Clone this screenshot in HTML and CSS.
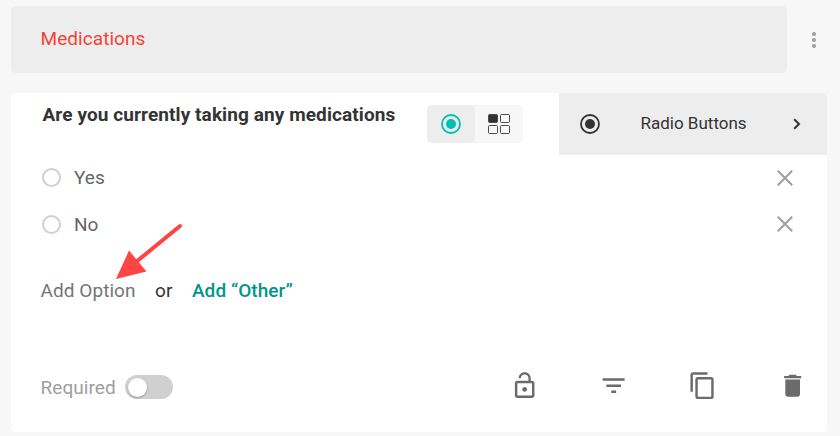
FILE: index.html
```
<!DOCTYPE html>
<html lang="en">
<head>
    <meta charset="UTF-8">
    <meta name="viewport" content="width=device-width, initial-scale=1.0">
    <title>Form Builder</title>
    <link rel="stylesheet" href="styles.css">
</head>
<body>
    <header class="section-row">
        <div class="section-title"><span>Medications</span></div>
        <svg class="more" viewBox="0 0 24 24"><circle cx="12" cy="6" r="2"/><circle cx="12" cy="12" r="2"/><circle cx="12" cy="18" r="2"/></svg>
    </header>

    <main class="card">
        <div class="card-top">
            <h2 class="question">Are you currently taking any medications</h2>
            <div class="view-switch">
                <div class="view active">
                    <svg class="radio-icon" viewBox="0 0 20 20"><circle class="ring" cx="10" cy="10" r="9"/><circle cx="10" cy="10" r="5"/></svg>
                </div>
                <div class="view">
                    <svg class="grid-icon" viewBox="0 0 22 20">
                        <rect class="filled" x="0.5" y="0.5" width="9" height="8" rx="1"/>
                        <rect x="12.5" y="0.5" width="9" height="8" rx="1"/>
                        <rect x="0.5" y="11.5" width="9" height="8" rx="1"/>
                        <rect x="12.5" y="11.5" width="9" height="8" rx="1"/>
                    </svg>
                </div>
            </div>
            <div class="type-select">
                <svg class="radio-icon" viewBox="0 0 20 20"><circle class="ring" cx="10" cy="10" r="9"/><circle cx="10" cy="10" r="5"/></svg>
                <span class="type-name">Radio Buttons</span>
                <svg class="chevron" viewBox="0 0 8 12"><path d="M1.2 1.2 6 6 1.2 10.8"/></svg>
            </div>
        </div>

        <div class="options">
            <div class="option">
                <span class="circle"></span>
                <span class="option-text">Yes</span>
                <svg class="remove" viewBox="0 0 16 16"><path d="M.8.8l14.4 14.4M15.2.8L.8 15.2"/></svg>
            </div>
            <div class="option">
                <span class="circle"></span>
                <span class="option-text">No</span>
                <svg class="remove" viewBox="0 0 16 16"><path d="M.8.8l14.4 14.4M15.2.8L.8 15.2"/></svg>
            </div>
        </div>

        <div class="add-row">
            <span class="add-option">Add Option</span>
            <span class="or">or</span>
            <span class="add-other">Add “Other”</span>
        </div>

        <footer class="card-footer">
            <span class="required">Required</span>
            <span class="toggle"><span class="knob"></span></span>
            <div class="actions">
                <svg viewBox="0 0 24 24"><path d="M12 17c1.1 0 2-.9 2-2s-.9-2-2-2-2 .9-2 2 .9 2 2 2zm6-9h-1V6c0-2.76-2.24-5-5-5S7 3.24 7 6h1.9c0-1.71 1.39-3.1 3.1-3.1s3.1 1.39 3.1 3.1v2H6c-1.1 0-2 .9-2 2v10c0 1.1.9 2 2 2h12c1.1 0 2-.9 2-2V10c0-1.1-.9-2-2-2zm0 12H6V10h12v10z"/></svg>
                <svg viewBox="0 0 24 24"><path d="M10 18h4v-2h-4v2zM3 6v2h18V6H3zm3 7h12v-2H6v2z"/></svg>
                <svg viewBox="0 0 24 24"><path d="M16 1H4c-1.1 0-2 .9-2 2v14h2V3h12V1zm3 4H8c-1.1 0-2 .9-2 2v14c0 1.1.9 2 2 2h11c1.1 0 2-.9 2-2V7c0-1.1-.9-2-2-2zm0 16H8V7h11v14z"/></svg>
                <svg viewBox="0 0 24 24"><path d="M6 19c0 1.1.9 2 2 2h8c1.1 0 2-.9 2-2V7H6v12zM19 4h-3.5l-1-1h-5l-1 1H5v2h14V4z"/></svg>
            </div>
        </footer>

        <svg class="arrow" viewBox="0 0 70 60">
            <path class="shaft" d="M64 6 20 42"/>
            <path class="head" d="M0 59 13 30.5 30.5 51.5z"/>
        </svg>
    </main>
</body>
</html>
```
FILE: styles.css
```
* {
    box-sizing: border-box;
}
body {
    margin: 0;
    padding: 6px 0 0 11px;
    height: 436px;
    overflow: hidden;
    font-family: Roboto, "Liberation Sans", sans-serif;
    font-size: 19px;
    letter-spacing: 0.06px;
    background-color: #f7f7f7;
    color: #333333;
}
svg {
    display: block;
    flex: none;
}
.section-row {
    display: flex;
    align-items: center;
    gap: 15px;
}
.section-title {
    display: flex;
    align-items: center;
    width: 776px;
    height: 67px;
    padding: 0 0 2px 29.5px;
    border-radius: 5px;
    background-color: #ededed;
    color: #f44336;
}
.more {
    width: 24px;
    height: 24px;
    fill: #9e9e9e;
}
.card {
    position: relative;
    width: 816px;
    height: 339px;
    margin-top: 20px;
    border-radius: 5px;
    background-color: #ffffff;
}
.card-top {
    display: flex;
    height: 62px;
}
.question {
    width: 416px;
    margin: 0;
    padding: 10px 0 0 31.5px;
    font-size: 19px;
    line-height: 24px;
    font-weight: 700;
    letter-spacing: 0.09px;
    white-space: nowrap;
}
.view-switch {
    display: flex;
    width: 96px;
    height: 38px;
    margin: 12px 36px 0 0;
    border-radius: 5px;
    background-color: #f7f7f7;
}
.view {
    display: flex;
    align-items: center;
    justify-content: center;
    width: 48px;
    border-radius: 5px;
}
.active {
    background-color: #ededed;
    color: #00bfb3;
}
.radio-icon {
    width: 20px;
    height: 20px;
    fill: currentColor;
}
.radio-icon .ring {
    fill: none;
    stroke: currentColor;
    stroke-width: 1.8;
}
.grid-icon {
    width: 22px;
    height: 20px;
    fill: none;
    stroke: #4a4a4a;
}
.grid-icon .filled {
    fill: #333333;
}
.type-select {
    display: flex;
    align-items: center;
    width: 268px;
    padding: 0 26px 0 21px;
    border-radius: 0 5px 0 0;
    background-color: #ededed;
}
.type-name {
    flex: 1;
    padding: 0 0 2px 40.5px;
    font-size: 17px;
    letter-spacing: 0;
}
.chevron {
    width: 8px;
    height: 12px;
    fill: none;
    stroke: #333333;
    stroke-width: 2;
}
.options {
    padding: 0 34px 0 31px;
}
.option {
    display: flex;
    align-items: center;
    height: 48px;
}
.option:first-child {
    height: 45px;
}
.option:first-child .remove {
    margin-top: 1px;
}
.circle {
    width: 19px;
    height: 19px;
    border: 2px solid #d0d0d0;
    border-radius: 50%;
}
.option-text {
    flex: 1;
    padding-left: 13px;
    color: #666666;
}
.remove {
    width: 16px;
    height: 16px;
    fill: none;
    stroke: #9e9e9e;
    stroke-width: 2;
}
.add-row {
    display: flex;
    align-items: center;
    gap: 19.5px;
    height: 24px;
    margin-top: 30px;
    padding-left: 29.5px;
}
.add-option {
    color: #757575;
}
.add-other {
    color: #009688;
    font-weight: 500;
}
.card-footer {
    display: flex;
    align-items: center;
    height: 30px;
    margin-top: 70px;
    padding: 0 20px 0 29.5px;
}
.required {
    width: 75px;
    color: #9e9e9e;
}
.toggle {
    width: 48px;
    height: 24px;
    margin-left: 9.5px;
    padding: 3px;
    border-radius: 12px;
    background-color: #d0d0d0;
}
.knob {
    display: block;
    width: 19px;
    height: 19px;
    border-radius: 50%;
    background-color: #ffffff;
    box-shadow: 0 1px 2px rgba(0, 0, 0, 0.3);
}
.actions {
    display: flex;
    gap: 60px;
    margin: 0 0 2px auto;
}
.actions svg {
    width: 29.33px;
    height: 29.33px;
    fill: #6b6b6b;
}
/* pointer drawn over the option list */
.arrow {
    position: absolute;
    left: 105px;
    top: 127px;
    width: 70px;
    height: 60px;
}
.shaft {
    stroke: #ff4444;
    stroke-width: 4;
    stroke-linecap: round;
}
.head {
    fill: #ff4444;
}
```
